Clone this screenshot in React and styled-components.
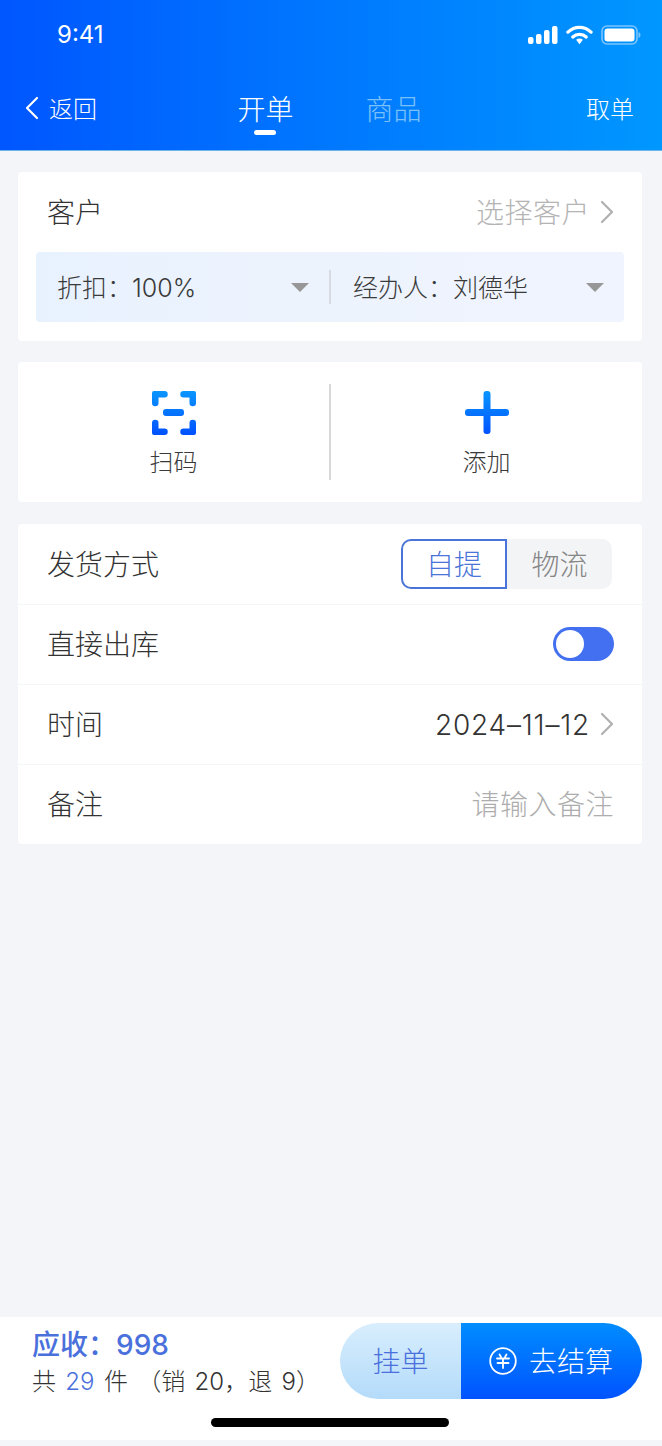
import React from "react"
import styled, { createGlobalStyle } from "styled-components"

const GlobalStyle = createGlobalStyle`
  html, body {
    margin: 0;
    padding: 0;
    background: #f3f5f8;
  }
  * {
    box-sizing: border-box;
  }
`

const Page = styled.div`
  width: 662px;
  height: 1446px;
  display: flex;
  flex-direction: column;
  background: #f3f5f8;
  color: #333;
  font-family: "Inter", "Noto Sans CJK SC", "Noto Sans", sans-serif;
  font-size: 28px;
  font-weight: 300;
  line-height: 40px;
  overflow: hidden;
`

const Header = styled.header`
  height: 151px;
  flex: none;
  background: linear-gradient(90deg, #0056ff 0%, #0078ff 50%, #0097ff 100%);
  border-bottom: 1px solid #6db4ea;
  color: #fff;
`

const StatusBar = styled.div`
  height: 68px;
  display: flex;
  align-items: center;
  justify-content: space-between;
  padding: 1px 21px 0 57px;
`

const Clock = styled.span`
  font-size: 24px;
  font-weight: 400;
  line-height: 34px;
`

const StatusIcons = styled.div`
  display: flex;
  align-items: center;
  gap: 8px;
`

const Nav = styled.nav`
  height: 82px;
  display: grid;
  grid-template-columns: 1fr auto 1fr;
  align-items: start;
  padding: 22px 28px 0 25px;
`

const Back = styled.div`
  display: flex;
  align-items: center;
  gap: 10px;
  font-size: 24px;

  svg {
    margin-top: -4px;
  }
`

const Tabs = styled.div`
  display: flex;
  gap: 72px;
`

const Tab = styled.div`
  display: flex;
  flex-direction: column;
  align-items: center;
  color: ${(p) => (p.$active ? "#fff" : "#7cc0f8")};

  &::after {
    content: "";
    width: 22px;
    height: 5px;
    border-radius: 3px;
    background: ${(p) => (p.$active ? "#fff" : "transparent")};
  }
`

const Cancel = styled.div`
  justify-self: end;
  font-size: 24px;
`

const Main = styled.main`
  flex: 1;
  display: flex;
  flex-direction: column;
  gap: 21px;
  padding: 21px 20px 0 18px;
`

const Card = styled.section`
  background: #fff;
  border-radius: 4px;
`

const CustomerRow = styled.div`
  height: 80px;
  display: flex;
  align-items: center;
  justify-content: space-between;
  padding: 0 28px 0 29px;
`

const Label = styled.span`
  padding-top: 2px;
`

const Trailing = styled.div`
  display: flex;
  align-items: center;
  gap: 10px;
  color: ${(p) => p.$color || "#b4b4b4"};
  letter-spacing: ${(p) => p.$spacing || "0"};
`

const FilterPanel = styled.div`
  height: 70px;
  margin: 0 18px 19px;
  display: flex;
  align-items: center;
  background: linear-gradient(90deg, #e8f2fe 0%, #edf3fd 50%, #f0f4fe 100%);
  border-radius: 4px;
  font-size: 25px;
`

const Filter = styled.div`
  flex: ${(p) => (p.$fixed ? "none" : "1")};
  width: ${(p) => (p.$fixed ? "293px" : "auto")};
  height: 100%;
  display: flex;
  align-items: center;
  justify-content: space-between;
  padding: ${(p) => p.$padding};
  color: #3a3a3a;
`

const FilterDivider = styled.div`
  width: 2px;
  height: 34px;
  background: #d8dce2;
`

const Caret = styled.span`
  width: 0;
  height: 0;
  border-left: 9px solid transparent;
  border-right: 9px solid transparent;
  border-top: 9px solid #979797;
`

const ActionCard = styled(Card)`
  height: 140px;
  margin-bottom: 1px;
  display: flex;
  align-items: center;
`

const Action = styled.div`
  flex: 1;
  display: flex;
  flex-direction: column;
  align-items: center;
  gap: 10px;
  padding-top: 8px;
  font-size: 24px;
  line-height: 36px;
  color: #3a3a3a;
`

const ActionDivider = styled.div`
  width: 2px;
  height: 96px;
  background: #d9d9d9;
`

const Row = styled.div`
  height: 80px;
  display: flex;
  align-items: center;
  justify-content: space-between;
  padding: 0 28px 0 29px;
  box-shadow: ${(p) => (p.$first ? "none" : "inset 0 1px 0 #f4f5f7")};
`

const Segments = styled.div`
  display: flex;
  height: 50px;
  margin-right: 2px;
`

const Segment = styled.div`
  width: ${(p) => (p.$active ? "106px" : "105px")};
  display: flex;
  align-items: center;
  justify-content: center;
  padding-top: 2px;
  color: ${(p) => (p.$active ? "#4a74d8" : "#858585")};
  background: ${(p) => (p.$active ? "#fff" : "#f3f4f6")};
  border: ${(p) => (p.$active ? "2px solid #4a74d8" : "none")};
  border-radius: ${(p) => (p.$active ? "10px 0 0 10px" : "0 10px 10px 0")};
`

const Switch = styled.div`
  width: 61px;
  height: 34px;
  padding: 3px;
  border-radius: 17px;
  background: #4270f0;
`

const Knob = styled.div`
  width: 28px;
  height: 28px;
  border-radius: 50%;
  background: #fff;
`

const Placeholder = styled.span`
  padding-top: 2px;
  color: #adadad;
  letter-spacing: 0.5px;
`

const Footer = styled.footer`
  height: 123px;
  flex: none;
  margin-bottom: 6px;
  padding: 6px 20px 0 32px;
  display: flex;
  flex-direction: column;
  background: #fff;
`

const FooterRow = styled.div`
  height: 76px;
  display: flex;
  align-items: center;
  justify-content: space-between;
`

const Summary = styled.div`
  display: flex;
  flex-direction: column;
  padding-top: 1px;
`

const Due = styled.div`
  color: #4a70dc;
  font-size: 28px;
  font-weight: 500;
  line-height: 40px;
`

const Totals = styled.div`
  font-size: 24px;
  line-height: 34px;
  word-spacing: 2.6px;
  white-space: pre;
`

const Count = styled.span`
  color: #4a70dc;
`

const Buttons = styled.div`
  display: flex;
  height: 76px;
`

const HoldButton = styled.div`
  width: 121px;
  display: flex;
  align-items: center;
  justify-content: center;
  padding-top: 2px;
  color: #4a70dc;
  background: linear-gradient(180deg, #d8eefd 0%, #b4dbfa 100%);
  border-radius: 38px 0 0 38px;
`

const PayButton = styled.div`
  width: 181px;
  display: flex;
  align-items: center;
  gap: 12px;
  padding-left: 28px;
  color: #fff;
  background: linear-gradient(180deg, #008dff 0%, #0053ff 100%);
  border-radius: 0 38px 38px 0;
`

const HomeBar = styled.div`
  width: 238px;
  height: 9px;
  margin: 19px 0 0 179px;
  border-radius: 5px;
  background: #000;
`

const Chevron = ({ color = "#b0b0b0", flip }) => (
  <svg width="14" height="24" viewBox="0 0 14 24" fill="none">
    <path
      d={flip ? "M12 2 2 12l10 10" : "M2 2l10 10L2 22"}
      stroke={color}
      strokeWidth="2.2"
      strokeLinecap="round"
      strokeLinejoin="round"
    />
  </svg>
)

const Signal = () => (
  <svg width="30" height="18" viewBox="0 0 30 18" fill="#fff">
    <rect x="0" y="11" width="5.5" height="7" rx="2" />
    <rect x="8" y="8" width="5.5" height="10" rx="2" />
    <rect x="16" y="4" width="5.5" height="14" rx="2" />
    <rect x="24" y="0" width="5.5" height="18" rx="2" />
  </svg>
)

const Wifi = () => (
  <svg width="27" height="20" viewBox="0 0 28 20" fill="none" stroke="#fff">
    <path d="M2 7c7-6.500 17-6.500 24 0" strokeWidth="3.4" strokeLinecap="round" />
    <path d="M7 12c4-3.600 10-3.600 14 0" strokeWidth="3.4" strokeLinecap="round" />
    <path d="M10.500 15 14 19.500 17.500 15c-2-1.800-5-1.800-7 0z" fill="#fff" stroke="none" />
  </svg>
)

const Battery = () => (
  <svg width="40" height="20" viewBox="0 0 40 20" fill="none">
    <rect x="1" y="1" width="35" height="18" rx="5" stroke="#7cc4fb" strokeWidth="1.600" />
    <rect x="3.500" y="3.500" width="30" height="13" rx="3" fill="#fff" />
    <path d="M37.500 7v6c1.200-.5 2-1.700 2-3s-.8-2.500-2-3z" fill="#7cc4fb" />
  </svg>
)

const BlueGradient = ({ id }) => (
  <linearGradient id={id} gradientUnits="userSpaceOnUse" x1="0" y1="0" x2="0" y2="43">
    <stop offset="0" stopColor="#0a96ff" />
    <stop offset="1" stopColor="#0052ff" />
  </linearGradient>
)

const ScanIcon = () => (
  <svg width="44" height="44" viewBox="0 0 44 44" fill="url(#scan)">
    <defs>
      <BlueGradient id="scan" />
    </defs>
    <path d="M2 0h10.500a3 3 0 0 1 0 6.500H6.500V12a3.250 3.250 0 0 1-6.500 0V2a2 2 0 0 1 2-2z" />
    <path d="M42 0H31.500a3 3 0 0 0 0 6.500h6V12a3.250 3.250 0 0 0 6.500 0V2a2 2 0 0 0-2-2z" />
    <path d="M2 44h10.500a3 3 0 0 0 0-6.500H6.500V32a3.250 3.250 0 0 0-6.500 0v10a2 2 0 0 0 2 2z" />
    <path d="M42 44H31.500a3 3 0 0 1 0-6.500h6V32a3.250 3.250 0 0 1 6.500 0v10a2 2 0 0 1-2 2z" />
    <rect x="11" y="18" width="21" height="7" rx="3" />
  </svg>
)

const PlusIcon = () => (
  <svg width="44" height="44" viewBox="0 0 44 44" fill="none">
    <defs>
      <BlueGradient id="plus" />
    </defs>
    <g fill="url(#plus)">
      <rect x="18.500" y="0" width="7" height="43" rx="3" />
      <rect x="0" y="18" width="44" height="7" rx="3" />
    </g>
  </svg>
)

const YuanIcon = () => (
  <svg width="28" height="28" viewBox="0 0 28 28" fill="none" stroke="#fff" strokeWidth="1.800">
    <circle cx="14" cy="14" r="12.800" />
    <path d="M10.500 7.500 12 10M17.500 7.500 16 10M8 11.500h12M8.500 16h11M14 11.500V21" strokeLinecap="round" />
  </svg>
)

export default function App() {
  return (
    <Page>
      <GlobalStyle />
      <Header>
        <StatusBar>
          <Clock>9:41</Clock>
          <StatusIcons>
            <Signal />
            <Wifi />
            <Battery />
          </StatusIcons>
        </StatusBar>
        <Nav>
          <Back>
            <Chevron color="#fff" flip />
            返回
          </Back>
          <Tabs>
            <Tab $active>开单</Tab>
            <Tab>商品</Tab>
          </Tabs>
          <Cancel>取单</Cancel>
        </Nav>
      </Header>

      <Main>
        <Card>
          <CustomerRow>
            <Label>客户</Label>
            <Trailing $spacing="0.5px">
              <Label>选择客户</Label>
              <Chevron />
            </Trailing>
          </CustomerRow>
          <FilterPanel>
            <Filter $fixed $padding="0 20px 0 21px">
              <Label>折扣：100%</Label>
              <Caret />
            </Filter>
            <FilterDivider />
            <Filter $padding="0 20px 0 22px">
              <Label>经办人：刘德华</Label>
              <Caret />
            </Filter>
          </FilterPanel>
        </Card>

        <ActionCard>
          <Action>
            <ScanIcon />
            扫码
          </Action>
          <ActionDivider />
          <Action>
            <PlusIcon />
            添加
          </Action>
        </ActionCard>

        <Card>
          <Row $first>
            <Label>发货方式</Label>
            <Segments>
              <Segment $active>自提</Segment>
              <Segment>物流</Segment>
            </Segments>
          </Row>
          <Row>
            <Label>直接出库</Label>
            <Switch>
              <Knob />
            </Switch>
          </Row>
          <Row>
            <Label>时间</Label>
            <Trailing $color="#333" $spacing="0.8px">
              <Label>2024–11–12</Label>
              <Chevron />
            </Trailing>
          </Row>
          <Row>
            <Label>备注</Label>
            <Placeholder>请输入备注</Placeholder>
          </Row>
        </Card>
      </Main>

      <Footer>
        <FooterRow>
          <Summary>
            <Due>应收：998</Due>
            <Totals>
              共 <Count>29</Count> 件 （销 20，退 9）
            </Totals>
          </Summary>
          <Buttons>
            <HoldButton>挂单</HoldButton>
            <PayButton>
              <YuanIcon />
              <Label>去结算</Label>
            </PayButton>
          </Buttons>
        </FooterRow>
        <HomeBar />
      </Footer>
    </Page>
  )
}
